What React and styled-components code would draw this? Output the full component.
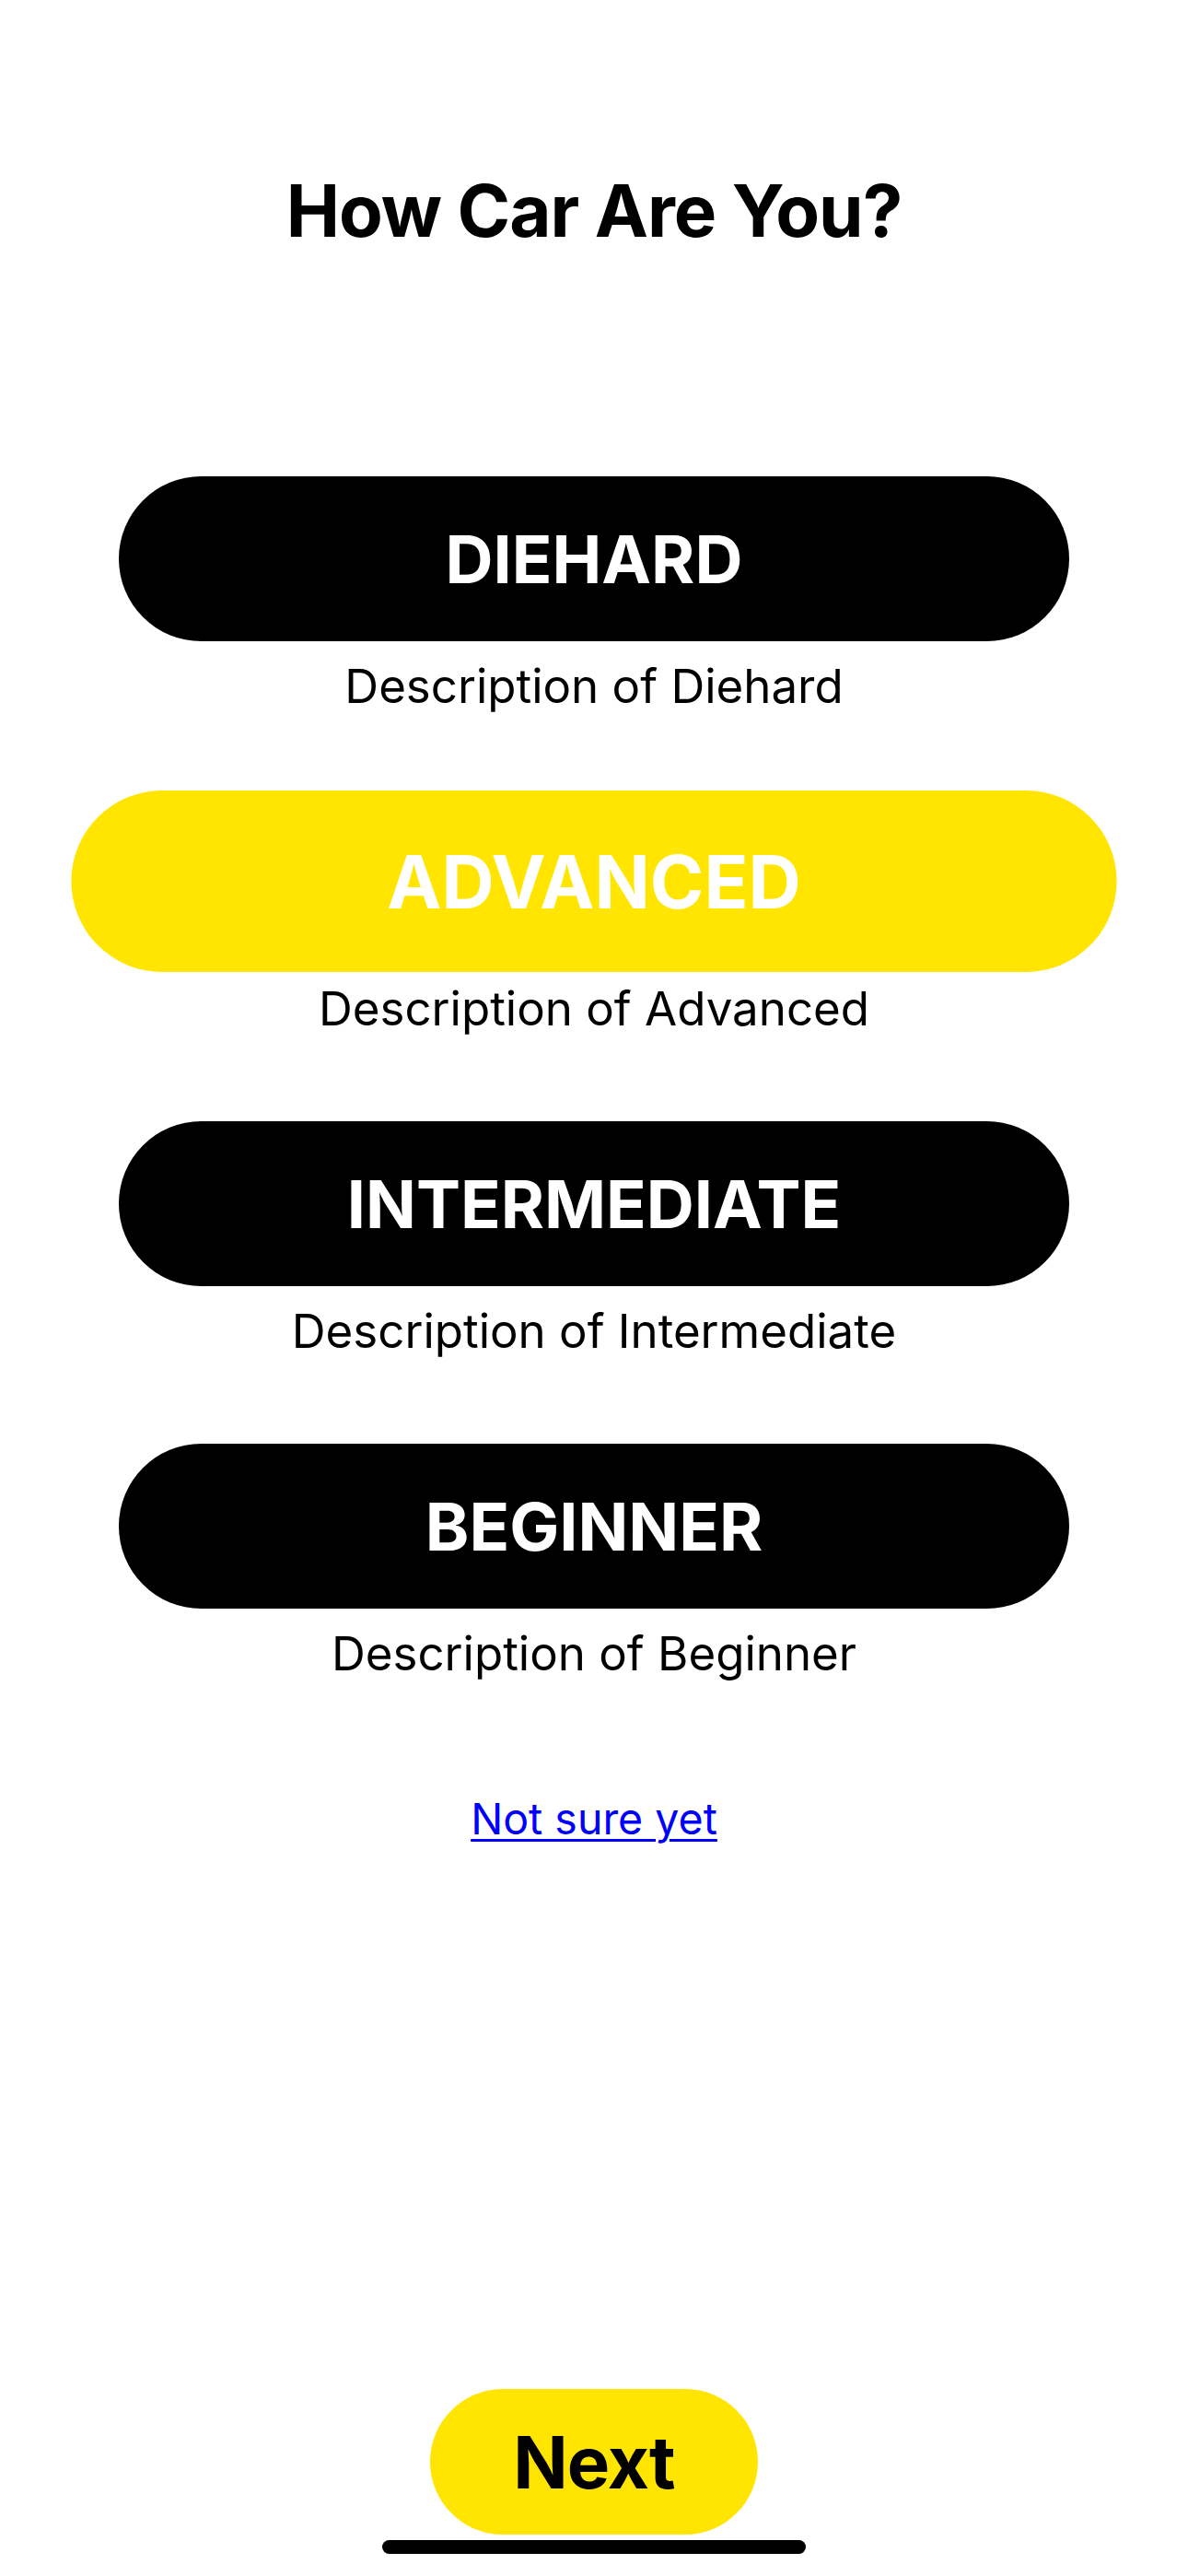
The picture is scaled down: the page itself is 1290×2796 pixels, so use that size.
import React, { useState } from "react";
import styled, { createGlobalStyle } from "styled-components";

const GlobalStyle = createGlobalStyle`
  html, body {
    margin: 0;
    padding: 0;
    background: #fff;
  }
  body {
    font-family: Inter, "Noto Sans", "Liberation Sans", sans-serif;
    color: #000;
  }
`;

const Screen = styled.div`
  min-height: 100vh;
  display: flex;
  flex-direction: column;
  align-items: center;
  padding: 190px 0 45px;
  box-sizing: border-box;
`;

const Title = styled.h1`
  margin: 0;
  font-size: 78px;
  line-height: 78px;
  font-weight: 700;
  letter-spacing: -1px;
`;

const Options = styled.div`
  margin-top: 249px;
  width: 1032px;
  display: flex;
  flex-direction: column;
  gap: 91px;
`;

const Option = styled.div`
  display: flex;
  flex-direction: column;
  align-items: center;
`;

const LevelButton = styled.button`
  width: 100%;
  height: 179px;
  border: none;
  border-radius: 90px;
  background: ${(p) => (p.$active ? "#ffe500" : "#000")};
  color: #fff;
  font-family: inherit;
  font-size: 72px;
  font-weight: 700;
  display: flex;
  align-items: center;
  justify-content: center;
  cursor: pointer;
  transform: ${(p) => (p.$active ? "scale(1.1)" : "none")};
`;

const Desc = styled.p`
  margin: 18px 0 0;
  font-size: 51px;
  line-height: 62px;
  font-weight: 400;
`;

const SkipLink = styled.a`
  margin-top: 120px;
  font-size: 46.5px;
  line-height: 57px;
  color: #0000ff;
  text-decoration: underline;
  text-decoration-thickness: 3px;
  text-underline-offset: 5px;
  cursor: pointer;
`;

const NextButton = styled.button`
  margin-top: auto;
  width: 356px;
  height: 158px;
  border: none;
  border-radius: 79px;
  background: #ffe500;
  color: #000;
  font-family: inherit;
  font-size: 78px;
  font-weight: 700;
  letter-spacing: -1px;
  cursor: pointer;
`;

const HomeIndicator = styled.div`
  position: fixed;
  left: 50%;
  bottom: 24px;
  transform: translateX(-50%);
  width: 460px;
  height: 15px;
  border-radius: 8px;
  background: #000;
`;

const levels = [
  { id: "diehard", label: "DIEHARD", desc: "Description of Diehard" },
  { id: "advanced", label: "ADVANCED", desc: "Description of Advanced" },
  { id: "intermediate", label: "INTERMEDIATE", desc: "Description of Intermediate" },
  { id: "beginner", label: "BEGINNER", desc: "Description of Beginner" },
];

export default function App() {
  const [selected, setSelected] = useState("advanced");

  return (
    <>
      <GlobalStyle />
      <Screen>
        <Title>How Car Are You?</Title>
        <Options>
          {levels.map((l) => (
            <Option key={l.id}>
              <LevelButton $active={selected === l.id} onClick={() => setSelected(l.id)}>
                {l.label}
              </LevelButton>
              <Desc>{l.desc}</Desc>
            </Option>
          ))}
        </Options>
        <SkipLink href="#" onClick={(e) => e.preventDefault()}>Not sure yet</SkipLink>
        <NextButton>Next</NextButton>
      </Screen>
      <HomeIndicator />
    </>
  );
}
